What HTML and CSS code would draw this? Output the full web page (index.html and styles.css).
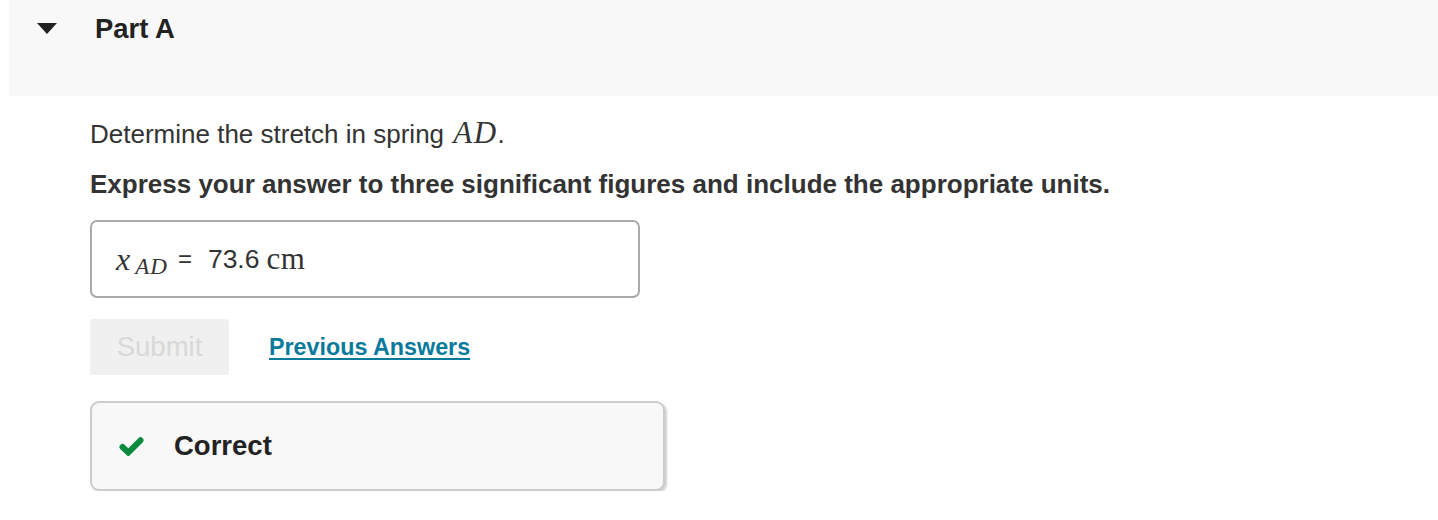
FILE: index.html
```html
<!DOCTYPE html>
<html>
<head>
<meta charset="utf-8">
<link rel="stylesheet" href="styles.css">
</head>
<body>
<div class="page">
  <div class="part-header">
    <span class="caret"></span>
    <h2 class="part-title">Part A</h2>
  </div>
  <div class="part-body">
    <p class="prompt">Determine the stretch in spring <span class="math">AD</span>.</p>
    <p class="instr">Express your answer to three significant figures and include the appropriate units.</p>
    <div class="answer-box">
      <span class="var">x</span><span class="sub">AD</span>
      <span class="eq">=</span>
      <span class="num">73.6</span><span class="unit">cm</span>
    </div>
    <div class="actions">
      <button class="submit" disabled>Submit</button>
      <a class="prev" href="#">Previous Answers</a>
    </div>
    <div class="feedback">
      <svg class="check" width="25" height="19" viewBox="0 0 25 19"><path d="M3.5 10 L9.3 15.5 L21.5 3.3" fill="none" stroke="#0a8a3e" stroke-width="6" stroke-linecap="round" stroke-linejoin="miter"/></svg>
      <span class="fb-text">Correct</span>
    </div>
  </div>
</div>
</body>
</html>
```

FILE: styles.css
```css
html, body {
  margin: 0;
  padding: 0;
  background: #ffffff;
}
body {
  font-family: "Liberation Sans", Arial, sans-serif;
  color: #333333;
}
.page {
  padding-left: 9px;
}
.part-header {
  background: #f8f8f8;
  height: 96px;
  display: flex;
  align-items: flex-start;
}
.caret {
  width: 0;
  height: 0;
  border-left: 10.5px solid transparent;
  border-right: 10.5px solid transparent;
  border-top: 11px solid #222222;
  margin: 23px 0 0 28px;
}
.part-title {
  margin: 13px 0 0 38px;
  font-size: 27.4px;
  font-weight: bold;
  color: #222222;
  line-height: 32px;
}
.part-body {
  padding-left: 81px;
}
.prompt {
  margin: 0;
  padding-top: 18px;
  font-size: 26px;
  line-height: 38px;
  color: #333333;
}
.math {
  font-family: "Liberation Serif", "Times New Roman", serif;
  font-style: italic;
  font-size: 31px;
  letter-spacing: 1.5px;
  margin-left: 2px;
}
.instr {
  margin: 15px 0 0;
  font-size: 26px;
  font-weight: bold;
  line-height: 32px;
  color: #333333;
}
.answer-box {
  margin-top: 20px;
  width: 524px;
  height: 74px;
  border: 2px solid #aaaaaa;
  border-radius: 7px;
  display: flex;
  align-items: center;
  padding-left: 22px;
  box-sizing: content-box;
  font-size: 26px;
  color: #333333;
}
.var {
  font-family: "Liberation Serif", "Times New Roman", serif;
  font-style: italic;
  font-size: 32px;
  margin-left: 2px;
}
.sub {
  font-family: "Liberation Serif", "Times New Roman", serif;
  font-style: italic;
  font-size: 23px;
  position: relative;
  top: 8px;
  margin-left: 5px;
  letter-spacing: 1px;
}
.eq {
  margin: 0 16px 0 10px;
  font-size: 24px;
}
.num {
  font-size: 26.5px;
}
.unit {
  font-family: "Liberation Serif", "Times New Roman", serif;
  font-size: 31px;
  margin-left: 7px;
  letter-spacing: 0.5px;
}
.actions {
  margin-top: 21px;
  display: flex;
  align-items: center;
  gap: 40px;
}
.submit {
  width: 139px;
  height: 56px;
  border: none;
  border-radius: 3px;
  background: #f0f0f0;
  color: #d8d8d8;
  font-family: "Liberation Sans", Arial, sans-serif;
  font-size: 27.5px;
  padding: 0;
}
.prev {
  color: #0a7a9c;
  font-size: 23.3px;
  font-weight: bold;
  text-decoration: underline;
  text-underline-offset: 3px;
  text-decoration-thickness: 2px;
}
.feedback {
  margin-top: 26px;
  width: 544px;
  height: 86px;
  border: 2px solid #cccccc;
  border-radius: 9px;
  background: #f8f8f8;
  box-shadow: 2px 2px 2px rgba(0,0,0,0.18);
  display: flex;
  align-items: center;
  padding-left: 27px;
  box-sizing: content-box;
}
.check {
  display: block;
}
.fb-text {
  margin-left: 30px;
  font-size: 27.5px;
  font-weight: bold;
  color: #222222;
}
```
